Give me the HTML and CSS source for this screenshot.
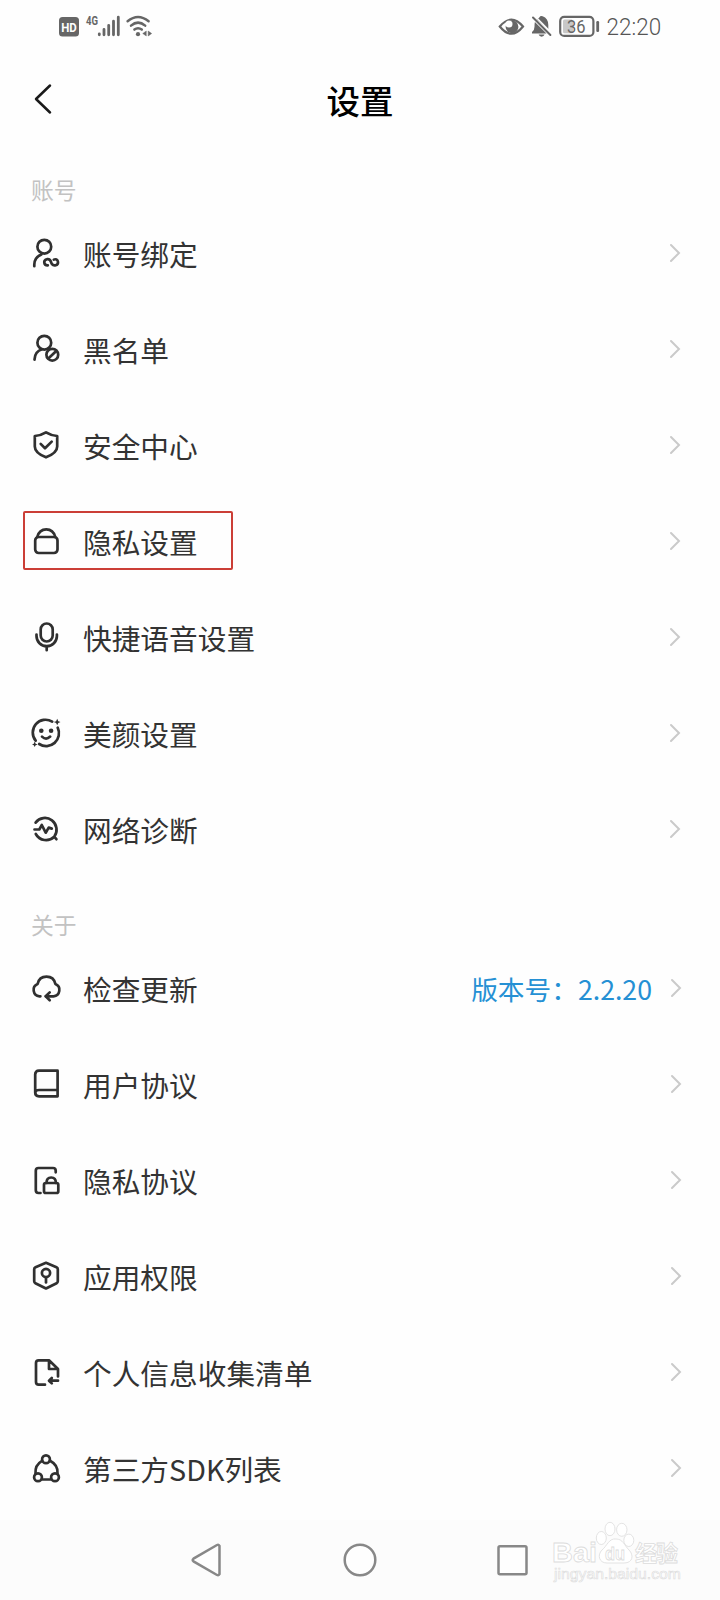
FILE: index.html
```html
<!DOCTYPE html>
<html lang="zh-CN">
<head>
<meta charset="utf-8">
<title>设置</title>
<link rel="stylesheet" href="styles.css">
</head>
<body>
<svg class="defs" width="0" height="0">
  <symbol id="chev" viewBox="0 0 12 20"><path d="M2 2 10 10 2 18"/></symbol>
</svg>
<div class="screen">
  <div class="status">
    <svg class="status-left" viewBox="56 10 100 34">
      <rect x="59" y="17" width="20" height="19.5" rx="3.5" fill="#666"/>
      <text x="61.2" y="31.800" class="hd" textLength="15.6" lengthAdjust="spacingAndGlyphs">HD</text>
      <text x="86" y="25" class="net" textLength="12" lengthAdjust="spacingAndGlyphs">4G</text>
      <path d="M99.3 33.8v1M104 29.5v5.3M108.7 25.3v9.5M113.5 21.2v13.6M118.3 17.2v17.6" stroke="#666" stroke-width="2.8" stroke-linecap="round"/>
      <g fill="none" stroke="#666" stroke-width="2.5" stroke-linecap="round"><path d="M127.6 21.2Q138 12.8 148.6 21.2M131 25.6Q138 19.6 145.2 25.6M134.4 29.6Q138 26.8 141.8 29.6"/></g>
      <circle cx="138" cy="34.2" r="2.1" fill="#666"/>
      <path d="M146.3 31v5l-3.6-2.5zM148.3 31v5M148.3 31l3.4 2.5-3.4 2.5z" fill="#666" stroke="#666" stroke-width=".4"/>
    </svg>
    <svg class="status-right" viewBox="496 10 168 34">
      <path d="M499.8 26.500Q511.3 12.800 523 26.500Q511.3 41 499.8 26.500z" fill="none" stroke="#666" stroke-width="2.2"/>
      <circle cx="512" cy="26.800" r="6.400" fill="#666"/>
      <circle cx="509" cy="24" r="3.500" fill="#fefefe"/>
      <path d="M536.600 19.400Q539.400 18 540.200 16.300Q541.400 15.700 542.600 16.300Q548.300 18.400 548.300 25v4.400zM534.900 22l11.600 11.600H532v-1.700q2.500-1.700 2.500-5.200 0-2.900.4-4.700zM538.600 34.600h6q-.7 2.100-3 2.100t-3-2.100z" fill="#666"/>
      <path d="M534.800 16 552 33.500" stroke="#fefefe" stroke-width="1.600"/>
      <path d="M533 17.500 550.400 35" stroke="#666" stroke-width="2" stroke-linecap="round"/>
      <rect x="560.200" y="16.900" width="33.200" height="19" rx="4" fill="none" stroke="#666" stroke-width="2.200"/>
      <rect x="563" y="19.600" width="10" height="13.600" rx="1.500" fill="#c8c8c8"/>
      <text x="567" y="32.500" class="batt" textLength="18.500" lengthAdjust="spacingAndGlyphs">36</text>
      <rect x="596.300" y="21" width="2.800" height="11" rx="1.200" fill="#666"/>
      <text x="606.600" y="35.300" class="clock" textLength="54.500" lengthAdjust="spacingAndGlyphs">22:20</text>
    </svg>
  </div>

  <header class="header">
    <svg class="back" viewBox="0 0 20 32"><path d="M17 2.500 3 16 17 29.500"/></svg>
    <h1 class="title">设置</h1>
  </header>

  <section class="group account">
    <h2 class="label">账号</h2>
    <div class="row">
      <svg class="icon" viewBox="0 0 32 32"><circle cx="14.300" cy="9.700" r="6.900"/><path d="M4.300 29.200v-1.600Q4.400 20.200 11.400 17.400"/><path d="M17.800 28.300C13.500 28.500 13 23 17 22.200C21.500 21.500 20.500 25.500 22 27.200C23.800 29.400 28.200 28.600 28 25C27.800 22.400 25.500 21.800 23.800 22.600"/></svg>
      <span class="name">账号绑定</span><svg class="chev"><use href="#chev"/></svg>
    </div>
    <div class="row">
      <svg class="icon" viewBox="0 0 32 32"><circle cx="14.300" cy="9.700" r="6.900"/><path d="M4.500 26.600Q4.800 18.500 12 16.300"/><circle cx="22.300" cy="21.700" r="5.900"/><path d="M18.600 25.200 26 18.200"/></svg>
      <span class="name">黑名单</span><svg class="chev"><use href="#chev"/></svg>
    </div>
    <div class="row">
      <svg class="icon" viewBox="0 0 32 32"><path d="M16 3.400Q21 6.500 27.200 7V17.500C27.200 23 22 26 16 28.300C10 26 4.800 23 4.800 17.500V7Q11 6.500 16 3.400z"/><path d="M10.700 14.900 15 19.200 21.700 12.600"/></svg>
      <span class="name">安全中心</span><svg class="chev"><use href="#chev"/></svg>
    </div>
    <div class="row marked">
      <svg class="icon" viewBox="0 0 32 32"><rect x="5.200" y="12" width="22.300" height="16" rx="3.500"/><path d="M7.200 12Q9.300 4.300 16.300 4.300T25.300 12"/></svg>
      <span class="name">隐私设置</span><svg class="chev"><use href="#chev"/></svg>
    </div>
    <div class="row">
      <svg class="icon" viewBox="0 0 32 32"><rect x="10.700" y="2.500" width="12" height="18" rx="6"/><path d="M6.500 13.500v1.500a10.200 10.200 0 0 0 20.400 0v-1.500M16.700 25.500v3.700"/></svg>
      <span class="name">快捷语音设置</span><svg class="chev"><use href="#chev"/></svg>
    </div>
    <div class="row">
      <svg class="icon" viewBox="0 0 32 32"><path d="M22.200 4.600A12.800 12.800 0 0 0 5.700 23.700M9.200 27A12.800 12.800 0 0 0 27.700 10.700"/><path d="M12 19.600Q16 23.600 20.200 19.600"/><path class="solid" d="M27.200 1.800 28.300 4.200 30.500 5 28.300 6 27.200 8.300 26.100 6 23.800 5 26.100 4.200zM4.700 24.500 5.600 26.800 7.800 27.500 5.600 28.300 4.700 30 3.800 28.300 2 27.500 3.800 26.800z"/><circle class="solid" cx="11.300" cy="13.700" r="2.300"/><circle class="solid" cx="21.100" cy="13.700" r="2.300"/></svg>
      <span class="name">美颜设置</span><svg class="chev"><use href="#chev"/></svg>
    </div>
    <div class="row">
      <svg class="icon" viewBox="0 0 32 32"><path d="M5.600 9.600A11.600 11.600 0 0 1 24.200 23.700L26.400 26.200M5.800 21A11.600 11.600 0 0 0 24.200 23.700"/><path d="M4.500 16.500H9.300L11.800 12 15.700 19.700 18.700 14.600 21.800 15.600"/></svg>
      <span class="name">网络诊断</span><svg class="chev"><use href="#chev"/></svg>
    </div>
  </section>

  <section class="group about">
    <h2 class="label">关于</h2>
    <div class="row">
      <svg class="icon" viewBox="0 0 32 32"><path d="M10.400 24.300H9.500A6.400 6.400 0 0 1 7.600 12Q9.200 4.700 16.500 4.700T25.400 12A6.400 6.400 0 0 1 23.500 24.300H15.800"/><path d="M19.700 20.400 15.700 24.300 19.700 28.200"/></svg>
      <span class="name">检查更新</span><span class="version">版本号：2.2.20</span><svg class="chev"><use href="#chev"/></svg>
    </div>
    <div class="row">
      <svg class="icon" viewBox="0 0 32 32"><path d="M27.600 2.700V28.300H9Q5.200 28.300 5.200 24.500V6.500Q5.200 2.700 9 2.700zM5.400 24.500Q5.500 22 9 22H27.600"/></svg>
      <span class="name">用户协议</span><svg class="chev"><use href="#chev"/></svg>
    </div>
    <div class="row">
      <svg class="icon" viewBox="0 0 32 32"><path d="M10.500 29H8.500Q5.800 29 5.800 26.300V6.700Q5.800 4 8.500 4H23Q25.700 4 25.700 6.700V8.300"/><rect x="14" y="19" width="14.300" height="10" rx="1.800"/><path d="M16.500 19Q16.500 13.500 21.200 13.500T25.900 19"/></svg>
      <span class="name">隐私协议</span><svg class="chev"><use href="#chev"/></svg>
    </div>
    <div class="row">
      <svg class="icon" viewBox="0 0 32 32"><path d="M16 2.800 26.500 7.200Q27.800 7.800 27.800 9.200V21.300Q27.800 22.600 26.600 23.200L16 28.500 5.400 23.200Q4.200 22.600 4.200 21.300V9.200Q4.200 7.800 5.500 7.200z"/><circle cx="16" cy="13" r="4.100"/><path d="M16 17.500V22.500"/></svg>
      <span class="name">应用权限</span><svg class="chev"><use href="#chev"/></svg>
    </div>
    <div class="row">
      <svg class="icon" viewBox="0 0 32 32"><path d="M15 28.700H8.700Q6 28.700 6 26V7Q6 4.300 8.700 4.300H19L28 13V20.500M19 4.300V13H28M28 24.700H19.500M21.800 22 19 24.700 21.800 27.400"/></svg>
      <span class="name">个人信息收集清单</span><svg class="chev"><use href="#chev"/></svg>
    </div>
    <div class="row">
      <svg class="icon" viewBox="0 0 32 32"><circle cx="16" cy="7.300" r="3.900"/><circle cx="8" cy="25.300" r="3.900"/><circle cx="25" cy="25.300" r="3.900"/><path d="M12 8.800Q4.800 13 5.500 21.500M20 8.800Q28.200 13 27.500 21.500M12.300 27.500H20.700"/></svg>
      <span class="name">第三方SDK列表</span><svg class="chev"><use href="#chev"/></svg>
    </div>
  </section>

  <nav class="nav">
    <svg class="key" viewBox="0 0 36 36"><path d="M30.500 3.800V32.200Q29.500 33.800 28 33L4.500 19.400Q2.800 18 4.500 16.600L28 3Q29.500 2.200 30.500 3.800z"/></svg>
    <svg class="key" viewBox="0 0 36 36"><circle cx="18" cy="18" r="15.300"/></svg>
    <svg class="key" viewBox="0 0 36 36"><rect x="3.500" y="4.200" width="28" height="28" rx="1.500"/></svg>
    <svg class="mark" viewBox="548 1520 140 70">
      <text x="552" y="1562" class="mark-big" textLength="45" lengthAdjust="spacingAndGlyphs">Bai</text>
      <g class="paw"><ellipse cx="601.300" cy="1538" rx="5" ry="6.500"/><ellipse cx="610" cy="1529" rx="5" ry="6.700"/><ellipse cx="621.800" cy="1529.800" rx="5.200" ry="6.500"/><ellipse cx="628.800" cy="1540.300" rx="5" ry="6.200"/><path d="M616 1539C609 1538 607 1546 602 1550C597 1555 599 1563 607 1563H624C633 1563 634 1555 629 1550C624 1545 623 1539 616 1539z"/></g>
      <text x="605" y="1560" class="mark-du" textLength="20" lengthAdjust="spacingAndGlyphs">du</text>
      <text x="635" y="1561" class="mark-cn" textLength="43">经验</text>
      <text x="554" y="1579" class="mark-url" textLength="127" lengthAdjust="spacingAndGlyphs">jingyan.baidu.com</text>
    </svg>
  </nav>
</div>
</body>
</html>
```

FILE: styles.css
```css
* { box-sizing: border-box; }
body {
  margin: 0;
  background: #fefefe;
  font-family: "Noto Sans CJK SC", sans-serif;
  color: #333;
}
.defs { position: absolute; }
.screen {
  width: 720px;
  height: 1600px;
  display: flex;
  flex-direction: column;
  overflow: hidden;
}
.status {
  height: 54px;
  padding: 10px 56px 0;
  display: flex;
  justify-content: space-between;
}
.status-left { width: 100px; height: 34px; }
.status-right { width: 168px; height: 34px; }
.hd { font: 700 13.500px Roboto, sans-serif; fill: #fefefe; }
.net { font: 700 12px Roboto, sans-serif; fill: #666; }
.batt { font: 400 17.500px Roboto, sans-serif; fill: #666; }
.clock { font: 300 23.500px Roboto, sans-serif; fill: #555; }

.header {
  height: 96px;
  padding: 0 33px;
  display: grid;
  grid-template-columns: 20px 1fr 20px;
  align-items: center;
}
.back {
  width: 20px;
  height: 32px;
  margin-top: -6px;
  fill: none;
  stroke: #1a1a1a;
  stroke-width: 2.500;
  stroke-linecap: round;
  stroke-linejoin: round;
}
.title {
  margin: 0;
  text-align: center;
  font-size: 33.500px;
  font-weight: 500;
  line-height: 92px;
  height: 96px;
  color: #000;
}

.label {
  margin: 0;
  padding-left: 31px;
  font-size: 22.800px;
  font-weight: 400;
  color: #c2c2c2;
}
.account .label { height: 55px; line-height: 79px; }
.about .label { height: 63px; line-height: 96px; }
.row {
  position: relative;
  height: 96px;
  padding: 0 38px 0 30px;
  display: flex;
  align-items: center;
}
.account .row { padding-right: 39px; }
.icon {
  width: 32px;
  height: 32px;
  flex: none;
  fill: none;
  stroke: #303030;
  stroke-width: 2.700;
  stroke-linecap: round;
  stroke-linejoin: round;
}
.icon .solid { fill: #303030; stroke: none; }
.name {
  flex: 1;
  padding: 1px 0 0 21px;
  font-size: 28.700px;
  line-height: 40px;
}
.version {
  padding-top: 2px;
  margin-right: 18px;
  font-size: 26.700px;
  line-height: 40px;
  color: #2590d4;
}
.chev {
  width: 12px;
  height: 20px;
  flex: none;
  fill: none;
  stroke: #cacaca;
  stroke-width: 2;
  stroke-linecap: round;
}
.marked::after {
  content: "";
  position: absolute;
  box-sizing: border-box;
  left: 23px;
  top: 18px;
  width: 210px;
  height: 59px;
  border: 2px solid #cb3e36;
  border-radius: 2px;
}

.nav {
  position: relative;
  height: 80px;
  margin-top: auto;
  padding: 0 189px;
  background: #fcfcfc;
  display: flex;
  align-items: center;
  justify-content: space-between;
}
.key {
  width: 36px;
  height: 36px;
  fill: #fefefe;
  stroke: #888;
  stroke-width: 2.500;
}
.mark {
  position: absolute;
  left: 548px;
  top: 0;
  width: 140px;
  height: 70px;
  fill: #fff;
  stroke: #dcdcdc;
  stroke-width: .8;
}
.mark-big { font: 700 28px "Liberation Sans", sans-serif; }
.mark-du { font: 700 19px "Liberation Sans", sans-serif; }
.mark-cn { font: 700 22px "Noto Sans CJK SC", sans-serif; }
.mark-url { font: 400 15px "Liberation Sans", sans-serif; stroke-width: .6; }
```
